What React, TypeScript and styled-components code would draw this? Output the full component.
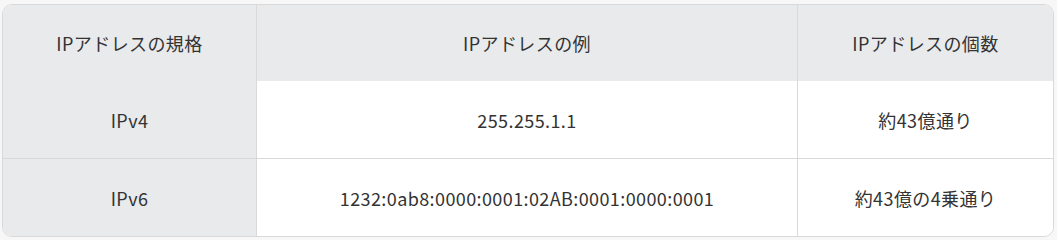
import styled, { createGlobalStyle } from "styled-components";

const GlobalStyle = createGlobalStyle`
  html, body {
    margin: 0;
    background: #f7f7f7;
  }
`;

const Page = styled.div`
  padding: 4px 3px 3px 2px;
`;

const Table = styled.table`
  width: 100%;
  border-collapse: separate;
  border-spacing: 0;
  border: 1px solid #d9d9d9;
  border-radius: 10px;
  overflow: hidden;
  background: #ffffff;
  font-family: "Noto Sans CJK JP", "Noto Sans", sans-serif;
  font-size: 18px;
  letter-spacing: 0.4px;
  color: #333333;
  table-layout: fixed;
`;

const Cell = styled.td<{ $shaded?: boolean; $height: number }>`
  height: ${(p) => p.$height}px;
  padding: 0 12px;
  text-align: center;
  vertical-align: middle;
  background: ${(p) => (p.$shaded ? "#e9eaec" : "#ffffff")};
  border-right: 1px solid #d9d9d9;
  border-bottom: 1px solid #d9d9d9;

  &:last-child {
    border-right: none;
  }

  tr:last-child > & {
    border-bottom: none;
  }
`;

const HeadCell = styled(Cell).attrs({ as: "th" })`
  font-weight: 400;
  border-bottom-color: #d0d0d0;
`;

const rows = [
  { kind: "IPv4", example: "255.255.1.1", count: "約43億通り" },
  {
    kind: "IPv6",
    example: "1232:0ab8:0000:0001:02AB:0001:0000:0001",
    count: "約43億の4乗通り",
  },
];

export default function App() {
  return (
    <>
      <GlobalStyle />
      <Page>
        <Table>
          <colgroup>
            <col style={{ width: 254 }} />
            <col style={{ width: 541 }} />
            <col />
          </colgroup>
          <thead>
            <tr>
              <HeadCell $shaded $height={76}>IPアドレスの規格</HeadCell>
              <HeadCell $shaded $height={76}>IPアドレスの例</HeadCell>
              <HeadCell $shaded $height={76}>IPアドレスの個数</HeadCell>
            </tr>
          </thead>
          <tbody>
            {rows.map((r) => (
              <tr key={r.kind}>
                <Cell $shaded $height={77}>{r.kind}</Cell>
                <Cell $height={77}>{r.example}</Cell>
                <Cell $height={77}>{r.count}</Cell>
              </tr>
            ))}
          </tbody>
        </Table>
      </Page>
    </>
  );
}
